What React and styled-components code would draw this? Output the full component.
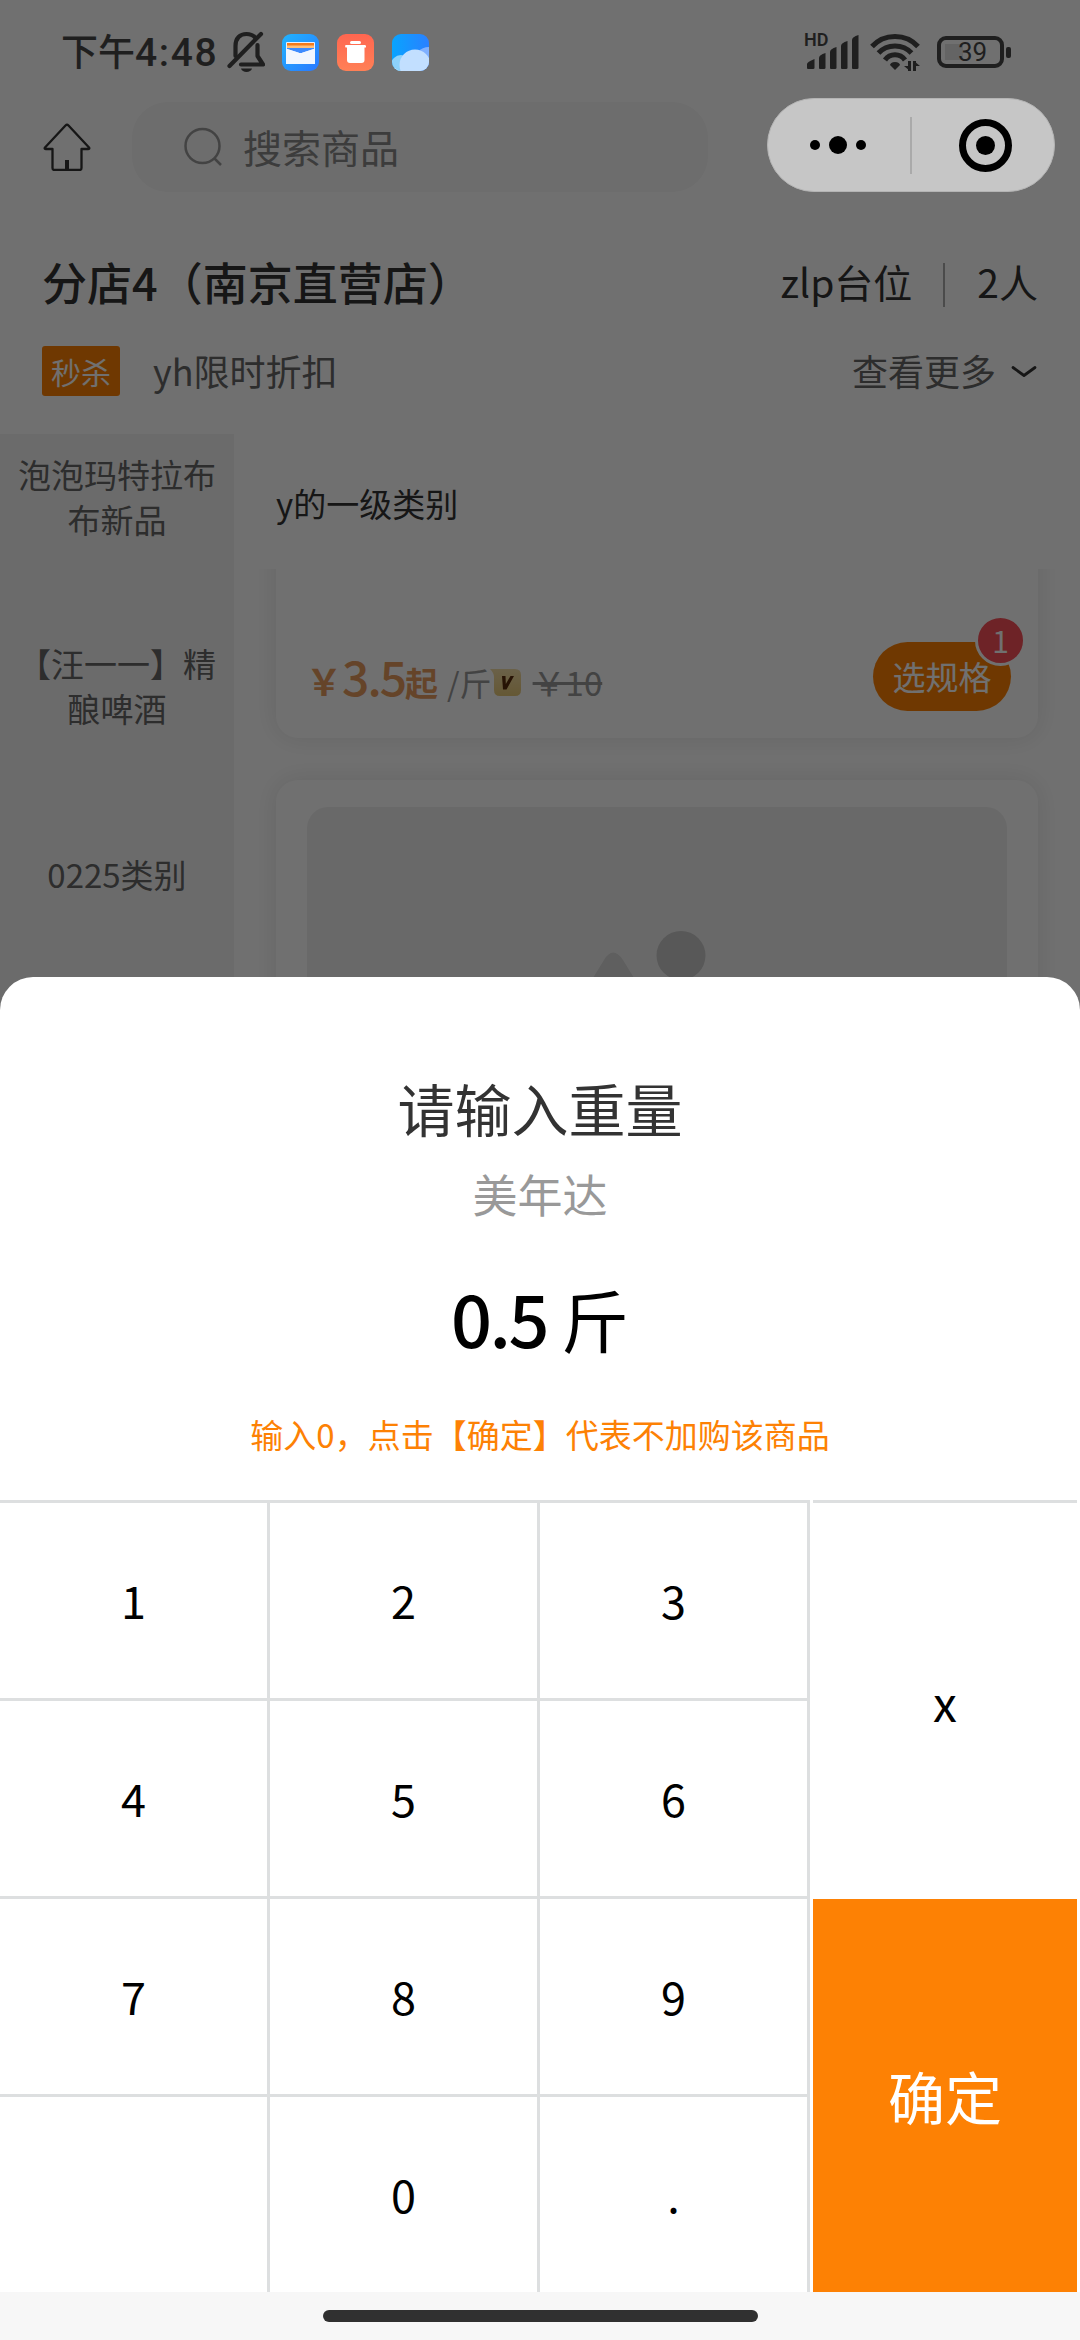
import React, { useState } from "react";
import styled, { createGlobalStyle } from "styled-components";

const ORANGE = "#fd8104";
const LINE_COLOR = "#dddfe0";
const INK = "#1f1f1f";

const GlobalStyle = createGlobalStyle`
  * {
    box-sizing: border-box;
  }

  body {
    margin: 0;
    font-family: "Noto Sans CJK SC", sans-serif;
  }
`;

const Phone = styled.div`
  position: relative;
  width: 1080px;
  height: 2340px;
  overflow: hidden;
  background: white;
  color: #333;
`;

/* the system bar and the capsule stay above the mask */
const StatusBar = styled.div`
  position: relative;
  z-index: 2;
  display: flex;
  align-items: center;
  height: 98px;
  padding: 6px 69px 0 61px;
  color: ${INK};
`;

const Clock = styled.div`
  width: 166px;
  padding-bottom: 1px;
  font-size: 37px;
  font-weight: 500;
  line-height: 40px;
  white-space: nowrap;
`;

const ClockTime = styled.span`
  font-family: Roboto, sans-serif;
  font-size: 39px;
  letter-spacing: 1.6px;
`;

const AppIcons = styled.div`
  display: flex;
  gap: 18px;
  margin-left: 17px;
`;

const SystemIcons = styled.div`
  display: flex;
  align-items: center;
  margin-left: auto;
`;

const Battery = styled.div`
  display: flex;
  align-items: center;
  gap: 2px;
  margin-left: 17px;

  &::after {
    content: "";
    width: 5px;
    height: 11px;
    border-radius: 2px;
    background: ${INK};
  }
`;

const BatteryBody = styled.div`
  display: flex;
  align-items: center;
  justify-content: center;
  width: 67px;
  height: 32px;
  padding-left: 4px;
  border: 4px solid ${INK};
  border-radius: 9px;
  background: linear-gradient(#646464, #646464) 4px 4px / 18px 16px no-repeat;
  font-family: Roboto, sans-serif;
  font-size: 26px;
`;

const NavBar = styled.div`
  display: flex;
  align-items: center;
  height: 94px;
  padding-left: 43px;
`;

const SearchBox = styled.div`
  display: flex;
  align-items: center;
  width: 576px;
  height: 90px;
  margin: 4px 59px 0 41px;
  padding-left: 51px;
  border-radius: 36px;
  background: #f7f7f7;
  color: #888;
  font-size: 39px;
`;

const SearchText = styled.span`
  margin-left: 20px;
  padding-bottom: 3px;
`;

const Capsule = styled.div`
  position: relative;
  z-index: 2;
  width: 288px;
  height: 94px;
  border: 1px solid #b4b4b4;
  border-radius: 47px;
  background: #c6c6c6;
`;

const StoreRow = styled.div`
  display: flex;
  align-items: center;
  justify-content: space-between;
  height: 64px;
  margin-top: 57px;
  padding: 0 42px;
`;

const StoreName = styled.div`
  font-size: 45px;
  font-weight: 500;
`;

const TableInfo = styled.div`
  display: flex;
  align-items: center;
  font-size: 39px;
`;

const Divider = styled.i`
  width: 2px;
  height: 44px;
  margin: 8px 32px 0 31px;
  background: #aaa;
`;

const PromoRow = styled.div`
  display: flex;
  align-items: center;
  height: 50px;
  margin-top: 33px;
  padding: 0 43px 0 42px;
  color: #666;
  font-size: 36px;
  line-height: 48px;
`;

const PromoTag = styled.span`
  width: 78px;
  height: 50px;
  margin-right: 33px;
  border-radius: 3px;
  background: ${ORANGE};
  color: white;
  font-size: 30px;
  line-height: 50px;
  text-align: center;
`;

const PromoText = styled.span`
  padding-bottom: 2px;
`;

const More = styled.div`
  display: flex;
  align-items: center;
  gap: 15px;
  margin-left: auto;
`;

const Body = styled.div`
  display: flex;
  height: 620px;
  margin-top: 38px;
  overflow: hidden;
`;

const Sidebar = styled.ul`
  width: 234px;
  margin: 0;
  padding: 0;
  list-style: none;
  background: #f4f4f4;
`;

const Category = styled.li`
  display: flex;
  align-items: center;
  justify-content: center;
  height: 189px;
  padding: 0 17px;
  color: #666;
  font-size: 33px;
  line-height: 45px;
  text-align: center;

  &:first-child {
    margin-top: -32px;
  }
`;

const Main = styled.div`
  flex: 1;
`;

const SectionTitle = styled.div`
  height: 135px;
  padding: 2px 42px 0;
  font-size: 33px;
  line-height: 135px;
`;

const Goods = styled.div`
  display: flex;
  flex-direction: column;
  gap: 42px;
  height: 485px;
  padding: 0 42px;
  overflow: hidden;
`;

const Card = styled.div`
  flex-shrink: 0;
  border-radius: 22px;
  background: white;
  box-shadow: 0 0 24px rgba(0, 0, 0, 0.1);
`;

const PriceCard = styled(Card)`
  display: flex;
  align-items: flex-end;
  justify-content: space-between;
  height: 200px;
  margin-top: -31px;
  padding: 0 27px 27px 30px;
`;

const PictureCard = styled(Card)`
  height: 400px;
  padding: 27px 31px;
`;

const Picture = styled.div`
  height: 350px;
  border-radius: 21px;
  background: #f0f0f0;
`;

const Price = styled.div`
  display: flex;
  align-items: baseline;
  height: 71px;
  line-height: 71px;
  color: #e69b5f;
  font-size: 36px;
  font-weight: 700;
`;

const Amount = styled.span`
  font-size: 48px;
  font-weight: 500;
  letter-spacing: -2px;
`;

const Suffix = styled.span`
  font-size: 33px;
`;

const Unit = styled.span`
  margin: 0 -2px 0 9px;
  color: #999;
  font-size: 32px;
  font-weight: 400;
`;

const OldPrice = styled.del`
  margin-left: 12px;
  color: #999;
  font-size: 33px;
  font-weight: 400;
`;

const SpecButton = styled.div`
  position: relative;
  width: 138px;
  height: 69px;
  border-radius: 35px;
  background: ${ORANGE};
  color: white;
  font-size: 33px;
  line-height: 69px;
  text-align: center;
`;

const Count = styled.span`
  position: absolute;
  top: -27px;
  right: -15px;
  width: 51px;
  height: 51px;
  border: 3px solid white;
  border-radius: 50%;
  background: #fa5159;
  font-size: 30px;
  line-height: 44px;
`;

const Mask = styled.div`
  position: absolute;
  inset: 0;
  z-index: 1;
  background: rgba(0, 0, 0, 0.56);
`;

const Sheet = styled.div`
  position: absolute;
  right: 0;
  bottom: 0;
  left: 0;
  z-index: 3;
  display: flex;
  flex-direction: column;
  height: 1363px;
  padding-top: 100px;
  border-radius: 33px 33px 0 0;
  background: white;
  text-align: center;
`;

const Title = styled.div`
  font-size: 57px;
  line-height: 60px;
`;

const Subtitle = styled.div`
  margin-top: 27px;
  color: #999;
  font-size: 45px;
  line-height: 60px;
`;

const Weight = styled.div`
  display: flex;
  align-items: baseline;
  justify-content: center;
  height: 80px;
  margin-top: 53px;
  color: black;
  font-size: 68px;
  line-height: 80px;
`;

const WeightValue = styled.span`
  margin-right: 14px;
  font-size: 72px;
  font-weight: 500;
  letter-spacing: -2.5px;
`;

const Hint = styled.div`
  margin-top: 57px;
  color: ${ORANGE};
  font-size: 33px;
  line-height: 40px;
`;

const Keypad = styled.div`
  display: flex;
  gap: 3px;
  height: 792px;
  margin-top: 46px;
  padding-right: 3px;
  color: black;
  font-size: 45px;
`;

const Digits = styled.div`
  display: grid;
  grid-template-columns: repeat(3, 270px);
  grid-template-rows: repeat(4, 198px);
`;

const Key = styled.div`
  display: flex;
  align-items: center;
  justify-content: center;
  padding-bottom: 2px;
  border-top: 3px solid ${LINE_COLOR};
  border-right: 3px solid ${LINE_COLOR};
  cursor: pointer;
`;

const Actions = styled.div`
  flex: 1;
  display: flex;
  flex-direction: column;
`;

const DeleteKey = styled(Key)`
  height: 399px;
  padding-bottom: 0;
  border-right: none;
  font-size: 48px;
`;

const ConfirmKey = styled(Key)`
  flex: 1;
  border: none;
  background: ${ORANGE};
  color: white;
  font-size: 57px;
`;

const HomeIndicator = styled.div`
  display: flex;
  justify-content: center;
  height: 48px;
  padding-top: 18px;
  background: #f7f7f7;

  &::after {
    content: "";
    width: 435px;
    height: 12px;
    border-radius: 6px;
    background: #303030;
  }
`;

const HomeSvg = styled.svg`
  margin-top: 4px;
`;

const CATEGORIES = ["泡泡玛特拉布布新品", "【汪一一】精酿啤酒", "0225类别"];
const KEYS = ["1", "2", "3", "4", "5", "6", "7", "8", "9", "", "0", "."];

const MuteIcon = () => (
  <svg width="38" height="42" viewBox="0 0 38 42" fill="none" stroke={INK} strokeWidth="4.200" strokeLinecap="round" strokeLinejoin="round">
    <path d="M8.500 25V15C8.500 7 13 3 19.500 3C23 3 26 4 28 6.500" />
    <path d="M30.500 14V25L36 33.500H14" />
    <path d="M2.500 35L34 3" />
    <path d="M14 37.500H25C24 42 15 42 14 37.500Z" fill={INK} stroke="none" />
  </svg>
);

const MailIcon = () => (
  <svg width="37" height="37" viewBox="0 0 37 37">
    <defs>
      <linearGradient id="mail" x1="0" y1="0" x2="1" y2="1">
        <stop offset="0" stopColor="#20b4ff" />
        <stop offset="1" stopColor="#2a78ff" />
      </linearGradient>
    </defs>
    <rect width="37" height="37" rx="9" fill="url(#mail)" />
    <rect x="4" y="8" width="29" height="22" rx="1" fill="#e6f1ff" />
    <rect x="5" y="9" width="27" height="3" fill="#f47a1c" />
    <rect x="5" y="11.500" width="27" height="2.500" fill="#ffc07a" />
    <path d="M5 14H32V15L21 18.500Q18.500 19.500 16 18.500L5 15Z" fill="#3d8bff" />
    <path d="M4 14.500L16 18.500Q18.500 19.500 21 18.500L33 14.500V30H4Z" fill="#f1f6ff" />
  </svg>
);

const TrashIcon = () => (
  <svg width="37" height="37" viewBox="0 0 37 37">
    <defs>
      <linearGradient id="trash" x1="0" y1="0" x2="0" y2="1">
        <stop offset="0" stopColor="#ff6650" />
        <stop offset="1" stopColor="#ff8056" />
      </linearGradient>
    </defs>
    <rect width="37" height="37" rx="9" fill="url(#trash)" />
    <rect x="13" y="7" width="11" height="3" rx="1.500" fill="white" />
    <path d="M9 11H28Q29.500 11 29 13.500H27.500V26Q27.500 29 24.500 29H13Q10 29 10 26V13.500H8.500Q7.500 11 9 11Z" fill="white" />
  </svg>
);

const WeatherIcon = () => (
  <svg width="37" height="37" viewBox="0 0 37 37">
    <defs>
      <linearGradient id="sky" x1="0" y1="0" x2="1" y2="0">
        <stop offset="0" stopColor="#08a4ff" />
        <stop offset="1" stopColor="#2a80ff" />
      </linearGradient>
      <clipPath id="tile">
        <rect width="37" height="37" rx="9" />
      </clipPath>
    </defs>
    <g clipPath="url(#tile)">
      <rect width="37" height="37" fill="url(#sky)" />
      <circle cx="37" cy="29" r="16" fill="#7fb0ff" />
      <circle cx="9" cy="31" r="10" fill="#8dd2fb" />
      <circle cx="23" cy="31" r="15.500" fill="#c2dfff" />
      <path d="M0 31Q4 37 12 37H0Z" fill="#c8ecff" />
    </g>
  </svg>
);

const SignalIcon = () => (
  <svg width="68" height="50" viewBox="-2 -5 68 50" fill={INK}>
    <text x="0" y="14" fontFamily="Roboto, sans-serif" fontSize="18" fontWeight="600">HD</text>
    <path d="M3 36V32Q3 30 10.500 27V36Q10.500 37 9 37H4Q3 37 3 36Z" />
    <path d="M15 36V26Q15 23 21.500 21V36Q21.500 37 20 37H16Q15 37 15 36Z" />
    <path d="M26 36V20Q26 17 32.500 15V36Q32.500 37 31 37H27Q26 37 26 36Z" />
    <path d="M37 36V14Q37 11 43.500 9V36Q43.500 37 42 37H38Q37 37 37 36Z" />
    <path d="M48 36V8Q48 5 54.500 3V36Q54.500 37 53 37H49Q48 37 48 36Z" />
  </svg>
);

const WifiIcon = () => (
  <svg width="50" height="40" viewBox="0 0 50 40" fill="none" stroke={INK} strokeWidth="5">
    <path d="M2 14.500C14 1 36 1 48 14.500" />
    <path d="M8.500 21C17 11.500 33 11.500 41.500 21" />
    <path d="M15 28C20 21 30 21 35 28" />
    <path d="M25 30C28 30 30 31.500 30 33L25 38L20 33C20 31.500 22 30 25 30Z" fill={INK} stroke="none" />
    <path d="M39.500 29V39M44.500 39V29" strokeWidth="3" />
    <path d="M34 34L40 39V34ZM44 29L50 34H44Z" fill={INK} stroke="none" />
  </svg>
);

const HomeIcon = () => (
  <HomeSvg width="48" height="48" viewBox="0 0 48 48" fill="none" stroke="#333" strokeWidth="2.300" strokeLinejoin="round">
    <path d="M22.500 2.500Q24 1 25.500 2.500L46 24.500Q47 26 45 26H38.500V45Q38.500 47 36.500 47H11.500Q9.500 47 9.500 45V26H3Q1 26 2 24.500Z" />
    <path d="M24 37V46" strokeWidth="4" />
  </HomeSvg>
);

const SearchIcon = () => (
  <svg width="40" height="40" viewBox="0 0 40 40" fill="none" stroke="#999" strokeWidth="2.500">
    <circle cx="19.500" cy="19" r="17" />
    <path d="M31 31L38 38" />
  </svg>
);

const CapsuleIcons = () => (
  <svg width="286" height="92" viewBox="0 0 286 92">
    <circle cx="47" cy="46" r="5" />
    <circle cx="70" cy="46" r="9" />
    <circle cx="93" cy="46" r="5" />
    <rect x="142" y="18" width="2" height="57" fill="#aaa" />
    <circle cx="217.500" cy="46.500" r="23" fill="none" stroke="black" strokeWidth="7" />
    <circle cx="217.500" cy="46.500" r="9.500" />
  </svg>
);

const ChevronIcon = () => (
  <svg width="26" height="14" viewBox="0 0 26 14" fill="none" stroke="#333" strokeWidth="2.800" strokeLinecap="round" strokeLinejoin="round">
    <path d="M2 3.500L13 11.500L24 3.500" />
  </svg>
);

const VipIcon = () => (
  <svg width="31" height="27" viewBox="0 0 31 27">
    <defs>
      <linearGradient id="gold" x1="0" y1="0" x2="0" y2="1">
        <stop offset="0" stopColor="#f2dca6" />
        <stop offset="1" stopColor="#e6c878" />
      </linearGradient>
    </defs>
    <path d="M0 0H25Q31 0 31 6V21Q31 27 25 27H10Q4 27 4 21V8Q4 4 0 0Z" fill="url(#gold)" />
    <path d="M12 7H15.500L15.800 15L20.500 7H24L16.500 20.500H13Z" fill="#5a2d0c" />
  </svg>
);

const Placeholder = () => (
  <svg width="699" height="350" viewBox="0 0 699 350">
    <circle cx="374" cy="148.500" r="24.500" fill="#c8c8c8" />
    <path d="M256 220L297 153Q306 138 316 153L357 220Z" fill="#d8d8d8" />
  </svg>
);

function App() {
  const [weight, setWeight] = useState("0.5");

  const PRESS_KEY = (key) => {
    setWeight(weight + key);
  };

  return (
    <Phone>
      <GlobalStyle />
      <StatusBar>
        <Clock>下午<ClockTime>4:48</ClockTime></Clock>
        <MuteIcon />
        <AppIcons>
          <MailIcon />
          <TrashIcon />
          <WeatherIcon />
        </AppIcons>
        <SystemIcons>
          <SignalIcon />
          <WifiIcon />
          <Battery>
            <BatteryBody>39</BatteryBody>
          </Battery>
        </SystemIcons>
      </StatusBar>
      <NavBar>
        <HomeIcon />
        <SearchBox>
          <SearchIcon />
          <SearchText>搜索商品</SearchText>
        </SearchBox>
        <Capsule>
          <CapsuleIcons />
        </Capsule>
      </NavBar>
      <StoreRow>
        <StoreName>分店4（南京直营店）</StoreName>
        <TableInfo>zlp台位<Divider />2人</TableInfo>
      </StoreRow>
      <PromoRow>
        <PromoTag>秒杀</PromoTag>
        <PromoText>yh限时折扣</PromoText>
        <More>
          <PromoText>查看更多</PromoText>
          <ChevronIcon />
        </More>
      </PromoRow>
      <Body>
        <Sidebar>
          {CATEGORIES.map((name) => (
            <Category key={name}>{name}</Category>
          ))}
        </Sidebar>
        <Main>
          <SectionTitle>y的一级类别</SectionTitle>
          <Goods>
            <PriceCard>
              <Price>
                ￥<Amount>3.5</Amount><Suffix>起</Suffix>
                <Unit>/斤</Unit>
                <VipIcon />
                <OldPrice>￥10</OldPrice>
              </Price>
              <SpecButton>
                选规格
                <Count>1</Count>
              </SpecButton>
            </PriceCard>
            <PictureCard>
              <Picture>
                <Placeholder />
              </Picture>
            </PictureCard>
          </Goods>
        </Main>
      </Body>
      <Mask />
      <Sheet>
        <Title>请输入重量</Title>
        <Subtitle>美年达</Subtitle>
        <Weight><WeightValue>{weight}</WeightValue>斤</Weight>
        <Hint>输入0，点击【确定】代表不加购该商品</Hint>
        <Keypad>
          <Digits>
            {KEYS.map((key, i) => (
              <Key key={i} onClick={PRESS_KEY.bind(null, key)}>{key}</Key>
            ))}
          </Digits>
          <Actions>
            <DeleteKey onClick={() => setWeight(weight.slice(0, -1))}>x</DeleteKey>
            <ConfirmKey>确定</ConfirmKey>
          </Actions>
        </Keypad>
        <HomeIndicator />
      </Sheet>
    </Phone>
  );
}

export default App;
